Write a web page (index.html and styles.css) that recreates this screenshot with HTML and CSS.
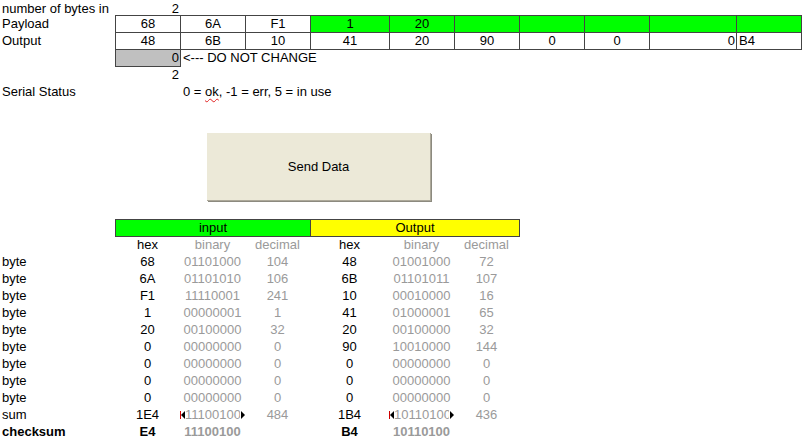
FILE: index.html
```html
<!DOCTYPE html>
<html>
<head>
<meta charset="utf-8">
<link rel="stylesheet" href="styles.css">
</head>
<body>
<div class="sheet">
  <div class="row first">
    <div class="c">number of bytes in</div>
    <div class="c rt">2</div>
  </div>
  <div class="row">
    <div class="c">Payload</div>
    <div class="c bd ctr">68</div>
    <div class="c bd ctr">6A</div>
    <div class="c bd ctr">F1</div>
    <div class="c bd ctr green">1</div>
    <div class="c bd ctr green">20</div>
    <div class="c bd green"></div>
    <div class="c bd green"></div>
    <div class="c bd green"></div>
    <div class="c bd green"></div>
    <div class="c bd green"></div>
  </div>
  <div class="row">
    <div class="c">Output</div>
    <div class="c bd ctr">48</div>
    <div class="c bd ctr">6B</div>
    <div class="c bd ctr">10</div>
    <div class="c bd ctr">41</div>
    <div class="c bd ctr">20</div>
    <div class="c bd ctr">90</div>
    <div class="c bd ctr">0</div>
    <div class="c bd ctr">0</div>
    <div class="c bd rt">0</div>
    <div class="c bd">B4</div>
  </div>
  <div class="row">
    <div class="c"></div>
    <div class="c bd rt grey-fill">0</div>
    <div class="c wide">&lt;--- DO NOT CHANGE</div>
  </div>
  <div class="row">
    <div class="c"></div>
    <div class="c rt">2</div>
  </div>
  <div class="row">
    <div class="c">Serial Status</div>
    <div class="c"></div>
    <div class="c wide">0 = <span class="spell">ok</span>, -1 = err, 5 = in use</div>
  </div>
  <div class="btn-area">
    <button class="send">Send Data</button>
  </div>
  <div class="row">
    <div class="c"></div>
    <div class="c bd ctr green span3">input</div>
    <div class="c bd ctr yellow span3">Output</div>
  </div>
  <div class="row">
    <div class="c"></div>
    <div class="c ctr">hex</div>
    <div class="c ctr g">binary</div>
    <div class="c ctr g">decimal</div>
    <div class="c ctr">hex</div>
    <div class="c ctr g">binary</div>
    <div class="c ctr g">decimal</div>
  </div>
  <div class="row">
    <div class="c">byte</div>
    <div class="c ctr">68</div><div class="c ctr g">01101000</div><div class="c ctr g">104</div>
    <div class="c ctr">48</div><div class="c ctr g">01001000</div><div class="c ctr g">72</div>
  </div>
  <div class="row">
    <div class="c">byte</div>
    <div class="c ctr">6A</div><div class="c ctr g">01101010</div><div class="c ctr g">106</div>
    <div class="c ctr">6B</div><div class="c ctr g">01101011</div><div class="c ctr g">107</div>
  </div>
  <div class="row">
    <div class="c">byte</div>
    <div class="c ctr">F1</div><div class="c ctr g">11110001</div><div class="c ctr g">241</div>
    <div class="c ctr">10</div><div class="c ctr g">00010000</div><div class="c ctr g">16</div>
  </div>
  <div class="row">
    <div class="c">byte</div>
    <div class="c ctr">1</div><div class="c ctr g">00000001</div><div class="c ctr g">1</div>
    <div class="c ctr">41</div><div class="c ctr g">01000001</div><div class="c ctr g">65</div>
  </div>
  <div class="row">
    <div class="c">byte</div>
    <div class="c ctr">20</div><div class="c ctr g">00100000</div><div class="c ctr g">32</div>
    <div class="c ctr">20</div><div class="c ctr g">00100000</div><div class="c ctr g">32</div>
  </div>
  <div class="row">
    <div class="c">byte</div>
    <div class="c ctr">0</div><div class="c ctr g">00000000</div><div class="c ctr g">0</div>
    <div class="c ctr">90</div><div class="c ctr g">10010000</div><div class="c ctr g">144</div>
  </div>
  <div class="row">
    <div class="c">byte</div>
    <div class="c ctr">0</div><div class="c ctr g">00000000</div><div class="c ctr g">0</div>
    <div class="c ctr">0</div><div class="c ctr g">00000000</div><div class="c ctr g">0</div>
  </div>
  <div class="row">
    <div class="c">byte</div>
    <div class="c ctr">0</div><div class="c ctr g">00000000</div><div class="c ctr g">0</div>
    <div class="c ctr">0</div><div class="c ctr g">00000000</div><div class="c ctr g">0</div>
  </div>
  <div class="row">
    <div class="c">byte</div>
    <div class="c ctr">0</div><div class="c ctr g">00000000</div><div class="c ctr g">0</div>
    <div class="c ctr">0</div><div class="c ctr g">00000000</div><div class="c ctr g">0</div>
  </div>
  <div class="row">
    <div class="c">sum</div>
    <div class="c ctr">1E4</div><div class="c g ovf"><span class="clip">11100100</span></div><div class="c ctr g">484</div>
    <div class="c ctr">1B4</div><div class="c g ovf"><span class="clip">10110100</span></div><div class="c ctr g">436</div>
  </div>
  <div class="row bold">
    <div class="c">checksum</div>
    <div class="c ctr">E4</div><div class="c ctr g">11100100</div><div class="c"></div>
    <div class="c ctr">B4</div><div class="c ctr g">10110100</div><div class="c"></div>
  </div>
</div>
</body>
</html>
```

FILE: styles.css
```css
html, body {
  margin: 0;
  padding: 0;
  background: #ffffff;
}

body {
  font-family: "Liberation Sans", Arial, sans-serif;
  font-size: 13px;
  color: #000000;
}

.sheet {
  display: flex;
  flex-direction: column;
  width: 806px;
}

.row {
  display: grid;
  grid-template-columns: 115px 65px 65px 65px 79px 65px 65px 65px 65px 87px 65px;
  height: 17px;
  line-height: 17px;
}

.row.first {
  height: 15px;
  align-items: end;
}

.row.first .c {
  height: 17px;
}

.c {
  padding: 0 2px;
  white-space: nowrap;
  overflow: hidden;
  min-width: 0;
}

.ctr { text-align: center; }
.rt { text-align: right; padding-right: 1px; }

.bd {
  border: 1px solid #444444;
  margin: 0 -1px -1px 0;
  line-height: 15px;
  position: relative;
}

.green { background: #00ff00; }
.yellow { background: #ffff00; }
.grey-fill { background: #c0c0c0; }

.span3 { grid-column: span 3; }

.wide {
  grid-column: span 6;
  overflow: visible;
  padding-left: 3px;
}

.spell {
  text-decoration: underline wavy #e02020;
  text-decoration-thickness: 1px;
  text-underline-offset: 2px;
  text-decoration-skip-ink: none;
}

.g { color: #9a9a9a; }

.bold { font-weight: bold; }

.btn-area {
  height: 119px;
  box-sizing: border-box;
  padding: 33px 0 0 207px;
}

.send {
  display: block;
  width: 224px;
  height: 68px;
  margin: 0;
  padding: 0;
  background: #ece9d8;
  border: none;
  border-right: 1px solid #aca899;
  border-bottom: 1px solid #aca899;
  box-shadow: 1px 1px 0 #8c8a7f;
  font-family: "Liberation Sans", Arial, sans-serif;
  font-size: 13px;
  color: #000000;
}

.ovf {
  position: relative;
  padding: 0 0 0 5px;
}

.clip {
  display: block;
  width: 55px;
  overflow: hidden;
}

.ovf::before,
.ovf::after {
  content: "";
  position: absolute;
  top: 5px;
  width: 0;
  height: 0;
  border-top: 4px solid transparent;
  border-bottom: 4px solid transparent;
}

.ovf::before {
  left: 1px;
  border-right: 4px solid #000000;
  box-shadow: -1px 0 0 #d00000;
}

.ovf::after {
  left: 61px;
  border-left: 4px solid #000000;
}
```
